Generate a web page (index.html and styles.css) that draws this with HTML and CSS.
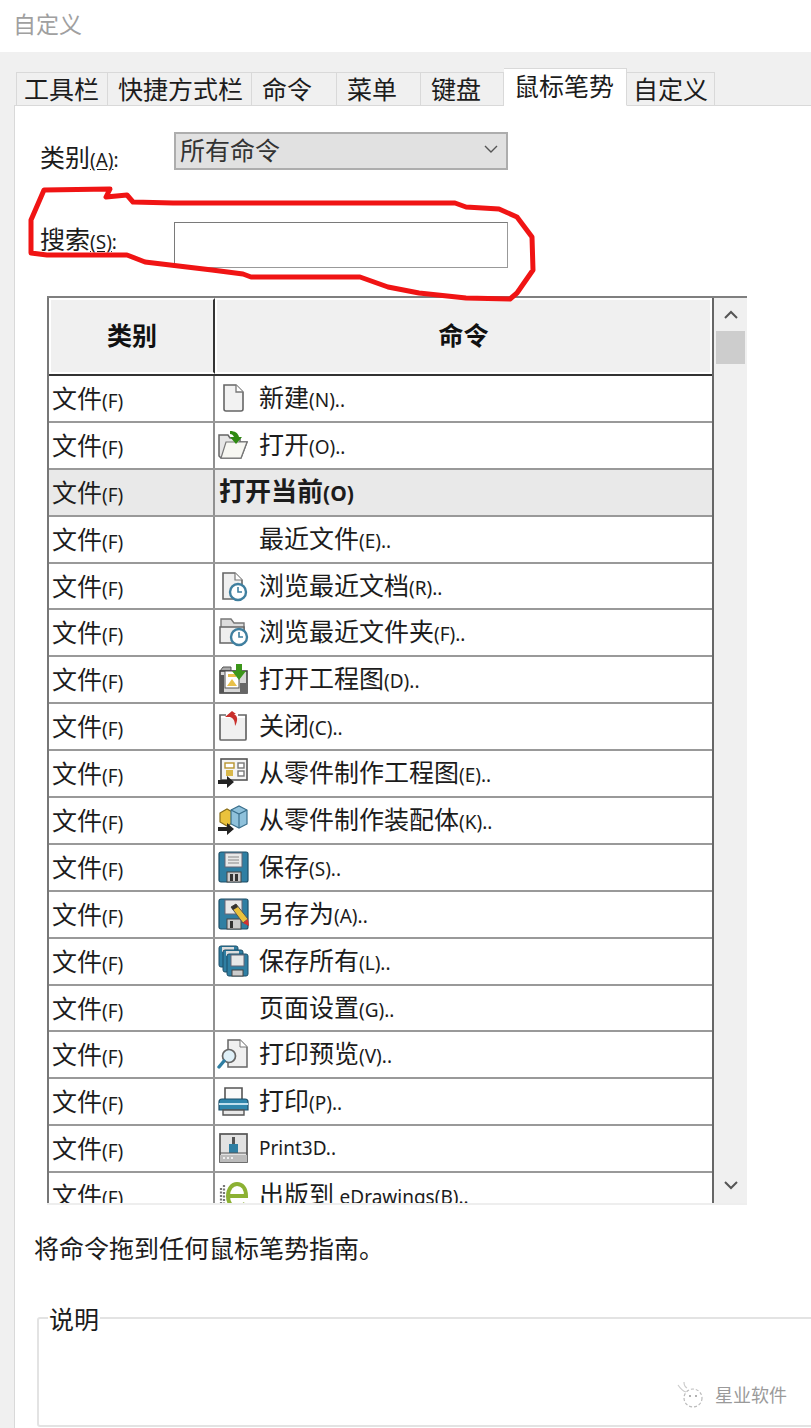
FILE: index.html
```html
<!DOCTYPE html>
<html lang="zh-CN">
<head>
<meta charset="utf-8">
<title>自定义</title>
<link rel="stylesheet" href="styles.css">
</head>
<body>
<div class="dialog">
  <header class="titlebar">自定义</header>
  <nav class="tabs">
    <div class="tab">工具栏</div>
    <div class="tab">快捷方式栏</div>
    <div class="tab">命令</div>
    <div class="tab">菜单</div>
    <div class="tab">键盘</div>
    <div class="tab active">鼠标笔势</div>
    <div class="tab">自定义</div>
  </nav>
  <main class="panel">
    <div class="form-row combo-row">
      <label class="form-label">类别<span class="mn u">(A)</span><span class="mn">:</span></label>
      <div class="combo">
        <span>所有命令</span>
        <svg class="combo-arrow" viewBox="0 0 16 10"><path d="M2 2l6 6 6-6" fill="none" stroke="#555" stroke-width="1.4"/></svg>
      </div>
    </div>
    <div class="form-row search-row">
      <label class="form-label">搜索<span class="mn u">(S)</span><span class="mn">:</span></label>
      <div class="search"></div>
    </div>

    <section class="grid">
      <div class="grid-main">
        <div class="grid-head">
          <div class="head-cell">类别</div>
          <div class="head-cell">命令</div>
        </div>
        <div class="grid-body">
          <div class="row">
            <div class="c1">文件<span class="mn">(F)</span></div>
            <div class="c2">
              <svg class="ico" viewBox="0 0 32 32"><path d="M7 3h12l7 7v17a2 2 0 0 1-2 2H9a2 2 0 0 1-2-2z" fill="#f2f2f2" stroke="#666" stroke-width="1.6"/><path d="M19 3v7h7" fill="#fff" stroke="#777" stroke-width="1.3"/></svg>
              <span>新建<span class="mn">(N)..</span></span>
            </div>
          </div>
          <div class="row">
            <div class="c1">文件<span class="mn">(F)</span></div>
            <div class="c2">
              <svg class="ico" viewBox="0 0 32 32"><path d="M2 6h9l2 3h10v4h7l-6 16H4L2 27z" fill="#e6e6e6" stroke="#666" stroke-width="1.5"/><path d="M9 13h21l-6 16H4z" fill="#f7f7f2" stroke="#777" stroke-width="1.2"/><path d="M13 2c5 0 8 2 9 6h3l-6 7-6-7h4c-1-2-2-3-4-3z" fill="#2f8a12"/></svg>
              <span>打开<span class="mn">(O)..</span></span>
            </div>
          </div>
          <div class="row group">
            <div class="c1">文件<span class="mn">(F)</span></div>
            <div class="c2 strong"><span>打开当前<span class="mn">(O)</span></span></div>
          </div>
          <div class="row">
            <div class="c1">文件<span class="mn">(F)</span></div>
            <div class="c2">
              <span class="ico"></span>
              <span>最近文件<span class="mn">(E)..</span></span>
            </div>
          </div>
          <div class="row">
            <div class="c1">文件<span class="mn">(F)</span></div>
            <div class="c2">
              <svg class="ico" viewBox="0 0 32 32"><path d="M6 3h12l7 7v8h-8v11H6z" fill="#f0f0f0" stroke="#666" stroke-width="1.6"/><path d="M18 3v7h7" fill="#fff" stroke="#777" stroke-width="1.2"/><circle cx="21" cy="22" r="8" fill="#fff" stroke="#3f7f9f" stroke-width="2.4"/><path d="M21 17v5h4" fill="none" stroke="#3f7f9f" stroke-width="1.6"/></svg>
              <span>浏览最近文档<span class="mn">(R)..</span></span>
            </div>
          </div>
          <div class="row">
            <div class="c1">文件<span class="mn">(F)</span></div>
            <div class="c2">
              <svg class="ico" viewBox="0 0 32 32"><path d="M4 3h10l3 4h10v9H4z" fill="#dcdcdc" stroke="#777" stroke-width="1.4"/><path d="M3 11h24v4h-9v12H3z" fill="#eee" stroke="#666" stroke-width="1.5"/><circle cx="22" cy="21" r="8" fill="#fff" stroke="#3f7f9f" stroke-width="2.4"/><path d="M22 16v5h4" fill="none" stroke="#3f7f9f" stroke-width="1.6"/></svg>
              <span>浏览最近文件夹<span class="mn">(F)..</span></span>
            </div>
          </div>
          <div class="row">
            <div class="c1">文件<span class="mn">(F)</span></div>
            <div class="c2">
              <svg class="ico" viewBox="0 0 32 32"><path d="M3 8l3-4h8v4z" fill="#aaa" stroke="#555"/><rect x="3" y="8" width="27" height="22" fill="#d8d8d8" stroke="#444" stroke-width="1.6"/><rect x="8" y="8" width="14" height="17" fill="#fff" stroke="#555"/><path d="M10 23l5-7 5 7z" fill="#e8c04a"/><rect x="11" y="11" width="8" height="3" fill="#e8c04a"/><rect x="3" y="12" width="4" height="18" fill="#555"/><rect x="23" y="20" width="7" height="10" fill="#666"/><path d="M19 1h6v7h4l-7 9-7-9h4z" fill="#3c961a"/></svg>
              <span>打开工程图<span class="mn">(D)..</span></span>
            </div>
          </div>
          <div class="row">
            <div class="c1">文件<span class="mn">(F)</span></div>
            <div class="c2">
              <svg class="ico" viewBox="0 0 32 32"><path d="M3 8h26v21H3z" fill="#f0f0f0"/><path d="M9 5H3v24a1 1 0 0 0 1 1h24a1 1 0 0 0 1-1V5h-8" fill="none" stroke="#666" stroke-width="1.7"/><path d="M15 1l-7 6h5c3 1 5 3 5 9 3-5 3-10-1-12h2z" fill="#c9302c"/></svg>
              <span>关闭<span class="mn">(C)..</span></span>
            </div>
          </div>
          <div class="row">
            <div class="c1">文件<span class="mn">(F)</span></div>
            <div class="c2">
              <svg class="ico" viewBox="0 0 32 32"><rect x="4" y="2" width="26" height="21" fill="#f4f4f4" stroke="#555" stroke-width="1.6"/><rect x="8" y="6" width="9" height="5" fill="#fff" stroke="#b8942e" stroke-width="1.4"/><rect x="21" y="6" width="6" height="5" fill="#fff" stroke="#777" stroke-width="1.4"/><rect x="21" y="14" width="6" height="5" fill="#fff" stroke="#777" stroke-width="1.4"/><rect x="9" y="13" width="7" height="6" fill="#d9b84a"/><path d="M1 23h9v-4l7 6-7 6v-4H1z" fill="#222"/></svg>
              <span>从零件制作工程图<span class="mn">(E)..</span></span>
            </div>
          </div>
          <div class="row">
            <div class="c1">文件<span class="mn">(F)</span></div>
            <div class="c2">
              <svg class="ico" viewBox="0 0 32 32"><path d="M3 9l7-4 7 4v9l-7 4-7-4z" fill="#eac23c" stroke="#8a6f18" stroke-width="1.2"/><path d="M14 6l8-4 8 4v14l-8 4-8-4z" fill="#8fc1db" stroke="#3a6f8c" stroke-width="1.2"/><path d="M14 6l8 4 8-4M22 10v14" fill="none" stroke="#3a6f8c" stroke-width="1.2"/><path d="M1 23h9v-4l7 6-7 6v-4H1z" fill="#222"/></svg>
              <span>从零件制作装配体<span class="mn">(K)..</span></span>
            </div>
          </div>
          <div class="row">
            <div class="c1">文件<span class="mn">(F)</span></div>
            <div class="c2">
              <svg class="ico" viewBox="0 0 32 32"><path d="M4 1h25a2 2 0 0 1 2 2v26a2 2 0 0 1-2 2H4a2 2 0 0 1-2-2V3a2 2 0 0 1 2-2z" fill="#2f7fa3" stroke="#1d4f68" stroke-width="1.2"/><rect x="8" y="2" width="17" height="14" fill="#e8e8e8" stroke="#667"/><path d="M11 6h11M11 9h11M11 12h11" stroke="#888" stroke-width="1.2"/><rect x="10" y="21" width="14" height="10" fill="#ccc" stroke="#444"/><rect x="13" y="23" width="3" height="7" fill="#333"/><rect x="18" y="23" width="3" height="7" fill="#333"/></svg>
              <span>保存<span class="mn">(S)..</span></span>
            </div>
          </div>
          <div class="row">
            <div class="c1">文件<span class="mn">(F)</span></div>
            <div class="c2">
              <svg class="ico" viewBox="0 0 32 32"><path d="M4 1h25a2 2 0 0 1 2 2v26a2 2 0 0 1-2 2H4a2 2 0 0 1-2-2V3a2 2 0 0 1 2-2z" fill="#2f7fa3" stroke="#1d4f68" stroke-width="1.2"/><rect x="8" y="2" width="17" height="14" fill="#e8e8e8" stroke="#667"/><rect x="10" y="21" width="14" height="10" fill="#ccc" stroke="#444"/><rect x="13" y="23" width="3" height="7" fill="#333"/><path d="M14 9l5-3 12 15-5 4z" fill="#eac23c" stroke="#555"/><path d="M26 25l5-4 1 7z" fill="#d32f2f"/><path d="M14 9l5-3 2 3-5 3z" fill="#333"/></svg>
              <span>另存为<span class="mn">(A)..</span></span>
            </div>
          </div>
          <div class="row">
            <div class="c1">文件<span class="mn">(F)</span></div>
            <div class="c2">
              <svg class="ico" viewBox="0 0 32 32"><rect x="2" y="1" width="19" height="21" rx="2" fill="#2f7fa3" stroke="#1d4f68"/><rect x="5" y="2" width="12" height="5" fill="#ddd"/><rect x="6" y="5" width="20" height="22" rx="2" fill="#2f7fa3" stroke="#1d4f68"/><rect x="9" y="6" width="13" height="5" fill="#ddd"/><rect x="10" y="9" width="21" height="22" rx="2" fill="#2f7fa3" stroke="#1d4f68"/><rect x="14" y="10" width="13" height="11" fill="#e8e8e8" stroke="#667"/><rect x="15" y="25" width="11" height="6" fill="#ccc" stroke="#444"/></svg>
              <span>保存所有<span class="mn">(L)..</span></span>
            </div>
          </div>
          <div class="row">
            <div class="c1">文件<span class="mn">(F)</span></div>
            <div class="c2">
              <span class="ico"></span>
              <span>页面设置<span class="mn">(G)..</span></span>
            </div>
          </div>
          <div class="row">
            <div class="c1">文件<span class="mn">(F)</span></div>
            <div class="c2">
              <svg class="ico" viewBox="0 0 32 32"><path d="M11 2h12l7 7v20H11z" fill="#f0f0f0" stroke="#666" stroke-width="1.5"/><path d="M23 2v7h7" fill="#fff" stroke="#777"/><circle cx="12" cy="18" r="6.5" fill="#dff0f8" stroke="#666" stroke-width="1.7"/><path d="M7 23l-5 6" stroke="#2f7fa3" stroke-width="3.4" stroke-linecap="round"/></svg>
              <span>打印预览<span class="mn">(V)..</span></span>
            </div>
          </div>
          <div class="row">
            <div class="c1">文件<span class="mn">(F)</span></div>
            <div class="c2">
              <svg class="ico" viewBox="0 0 32 32"><path d="M8 14V3h17v11" fill="#fafafa" stroke="#555" stroke-width="1.6"/><path d="M5 14h23a3 3 0 0 1 3 3v8H2v-8a3 3 0 0 1 3-3z" fill="#2f86ac" stroke="#1d4f68" stroke-width="1.2"/><rect x="2" y="18" width="29" height="2" fill="#bfe0ee"/><path d="M6 25h21v5H6z" fill="#e8e8e8" stroke="#555" stroke-width="1.4"/></svg>
              <span>打印<span class="mn">(P)..</span></span>
            </div>
          </div>
          <div class="row">
            <div class="c1">文件<span class="mn">(F)</span></div>
            <div class="c2">
              <svg class="ico" viewBox="0 0 32 32"><rect x="3" y="2" width="27" height="28" fill="#e2e2e2" stroke="#555" stroke-width="1.7"/><rect x="3" y="23" width="27" height="7" fill="#bbb"/><path d="M6 26h2M10 26h2M14 26h2" stroke="#fff" stroke-width="1.4"/><rect x="15" y="5" width="3" height="8" fill="#555"/><rect x="12" y="12" width="9" height="9" fill="#2f7fa3"/><path d="M3 21h27" stroke="#555"/></svg>
              <span class="latin">Print3D..</span>
            </div>
          </div>
          <div class="row">
            <div class="c1">文件<span class="mn">(F)</span></div>
            <div class="c2">
              <svg class="ico" viewBox="0 0 32 32"><path d="M4 9v16M7 6v22" stroke="#777" stroke-width="2.2" stroke-dasharray="2 1.5" fill="none"/><path d="M11 17h18c0-8-4-12-9-12s-9 5-9 12 4 12 9 12c4 0 7-2 8-5" fill="none" stroke="#8cb133" stroke-width="4"/></svg>
              <span>出版到 <span class="latin">eDrawings(B)..</span></span>
            </div>
          </div>
        </div>
      </div>
      <aside class="scroll">
        <svg class="scroll-arrow" viewBox="0 0 16 10"><path d="M2 8l6-6 6 6" fill="none" stroke="#555" stroke-width="2"/></svg>
        <div class="thumb"></div>
        <div class="track"></div>
        <svg class="scroll-arrow" viewBox="0 0 16 10"><path d="M2 2l6 6 6-6" fill="none" stroke="#555" stroke-width="2"/></svg>
      </aside>
    </section>

    <p class="hint">将命令拖到任何鼠标笔势指南。</p>

    <fieldset class="desc">
      <legend class="desc-legend">说明</legend>
      <div class="mark">
        <svg class="mark-ico" viewBox="0 0 30 30"><circle cx="18" cy="19" r="9" fill="none" stroke="#bbb" stroke-width="1.2" stroke-dasharray="3 2"/><path d="M3 6c2 3 4 6 8 7M9 3c0 3 1 5 3 6" fill="none" stroke="#ccc" stroke-width="1.2"/><circle cx="15" cy="17" r="1" fill="#999"/><circle cx="21" cy="17" r="1" fill="#999"/></svg>
        <span>星业软件</span>
      </div>
    </fieldset>
  </main>
</div>
<svg class="scribble" viewBox="0 0 811 310">
  <path d="M44 190L110 189L106 197L127 195L133 202L173 203L455 203L466 207L499 209L517 217L532 237L533 270L517 293L510 299L466 298L419 293L388 287L360 277L251 277L243 274L212 270L145 262L127 255L47 255L31 253L31 220Z" fill="none" stroke="#f01414" stroke-width="5" stroke-linejoin="round"/>
</svg>
</body>
</html>
```

FILE: styles.css
```css
* { box-sizing: border-box; }
html, body { margin: 0; padding: 0; }
body {
  width: 811px;
  height: 1428px;
  overflow: hidden;
  position: relative;
  background: #f0f0f0;
  color: #1c1c1c;
  font-family: "Noto Sans CJK SC", "Noto Sans", sans-serif;
}
.mn { font-family: "Noto Sans", "Noto Sans CJK SC", sans-serif; font-size: 19px; }
.latin { font-family: "Noto Sans", "Noto Sans CJK SC", sans-serif; font-size: 19px; }
.u { text-decoration: underline; text-underline-offset: 2px; }

.dialog { display: flex; flex-direction: column; height: 1428px; }
.titlebar {
  height: 52px;
  flex: none;
  background: #fff;
  padding: 7px 0 0 13px;
  font-size: 23px;
  line-height: 32px;
  color: #a0a0a0;
}

.tabs {
  flex: none;
  display: grid;
  grid-template-columns: 92px 144px 85px 84px 83px 123px 88px;
  align-items: end;
  height: 53px;
  padding-left: 16px;
  position: relative;
  z-index: 1;
}
.tab {
  height: 34px;
  margin-bottom: -1px;
  padding-left: 10px;
  background: #f0f0f0;
  border: 1px solid #d9d9d9;
  border-left-width: 0;
  font-size: 25px;
  line-height: 31px;
  white-space: nowrap;
}
.tab:first-child { border-left-width: 1px; padding-left: 7px; }
.tab:last-child { padding-left: 6px; }
.tab.active {
  height: 38px;
  background: #fff;
  border-bottom-color: #fff;
  line-height: 32px;
}

.panel {
  flex: 1;
  min-height: 0;
  margin-left: 14px;
  background: #fff;
  border-top: 1px solid #d9d9d9;
  border-left: 1px solid #d9d9d9;
  overflow: hidden;
  padding: 26px 0 0 22px;
}
.form-row { display: flex; align-items: flex-start; }
.form-label {
  width: 137px;
  height: 32px;
  flex: none;
  padding-left: 3px;
  font-size: 25px;
  line-height: 32px;
  white-space: nowrap;
}
.combo-row .form-label { padding-top: 8px; height: 42px; }
.search-row { margin-top: 48px; }

.combo {
  width: 334px;
  height: 38px;
  background: #e1e1e1;
  border: 2px solid #adadad;
  display: flex;
  align-items: center;
  justify-content: space-between;
  padding: 0 7px 4px 4px;
  font-size: 25px;
  color: #333;
}
.combo-arrow { width: 16px; height: 10px; }
.search {
  width: 334px;
  height: 46px;
  background: #fff;
  border: 1px solid #7a7a7a;
  border-right-color: #999;
  border-bottom-color: #999;
}

.grid {
  display: flex;
  width: 700px;
  height: 909px;
  margin: 28px 0 0 10px;
  border-top: 2px solid #7f7f7f;
  border-bottom: 2px solid #eeeeee;
}
.grid-main {
  width: 667px;
  flex: none;
  display: flex;
  flex-direction: column;
  border-left: 2px solid #777;
  border-right: 2px solid #666;
}
.grid-head {
  flex: none;
  height: 78px;
  display: grid;
  grid-template-columns: 166px 1fr;
  border-bottom: 2px solid #333;
}
.head-cell {
  background: #f0f0f0;
  border: 2px solid #fff;
  display: flex;
  align-items: center;
  justify-content: center;
  font-size: 25px;
  font-weight: 700;
  color: #111;
  padding-bottom: 4px;
}
.head-cell:first-child { border-right-color: #333; }

.grid-body { flex: 1; min-height: 0; overflow: hidden; }
.row {
  display: grid;
  grid-template-columns: 166px 1fr;
  height: 46.9px;
  border-bottom: 2px solid #999;
  font-size: 25px;
  line-height: 34px;
}
.row.group { background: #e9e9e9; }
.c1 {
  border-right: 2px solid #909090;
  padding: 4px 0 0 3px;
  white-space: nowrap;
}
.c2 {
  display: flex;
  align-items: center;
  padding: 0 0 1px 2px;
  white-space: nowrap;
}
.c2.strong { padding-left: 4px; font-weight: 700; font-size: 26px; }
.c2.strong .mn { font-size: 21px; font-weight: 700; }
.ico { width: 32px; height: 32px; flex: none; margin-right: 10px; display: block; }

.scroll {
  flex: 1;
  background: #f0f0f0;
  display: flex;
  flex-direction: column;
  align-items: center;
}
.scroll-arrow { width: 16px; height: 10px; flex: none; margin: 12px 0 11px; }
.track + .scroll-arrow { margin-bottom: 13px; }
.thumb { width: 29px; height: 33px; background: #cdcdcd; flex: none; }
.track { flex: 1; }

.hint {
  margin: 24px 0 0 -3px;
  height: 36px;
  font-size: 25px;
  line-height: 36px;
  white-space: nowrap;
}
.desc {
  margin: 37px -30px 0 0;
  padding: 0 52px 0 9px;
  height: 125px;
  border: 2px solid #e3e3e3;
  border-radius: 3px;
  min-width: 0;
}
.desc-legend {
  padding: 0 1px;
  font-size: 25px;
  line-height: 32px;
}
.mark {
  display: flex;
  align-items: center;
  justify-content: flex-end;
  gap: 10px;
  margin-top: 45px;
  font-size: 18px;
  color: #9a9a9a;
}
.mark-ico { width: 30px; height: 30px; }

.scribble {
  position: absolute;
  left: 0;
  top: 0;
  width: 811px;
  height: 310px;
  pointer-events: none;
  z-index: 2;
}
```
